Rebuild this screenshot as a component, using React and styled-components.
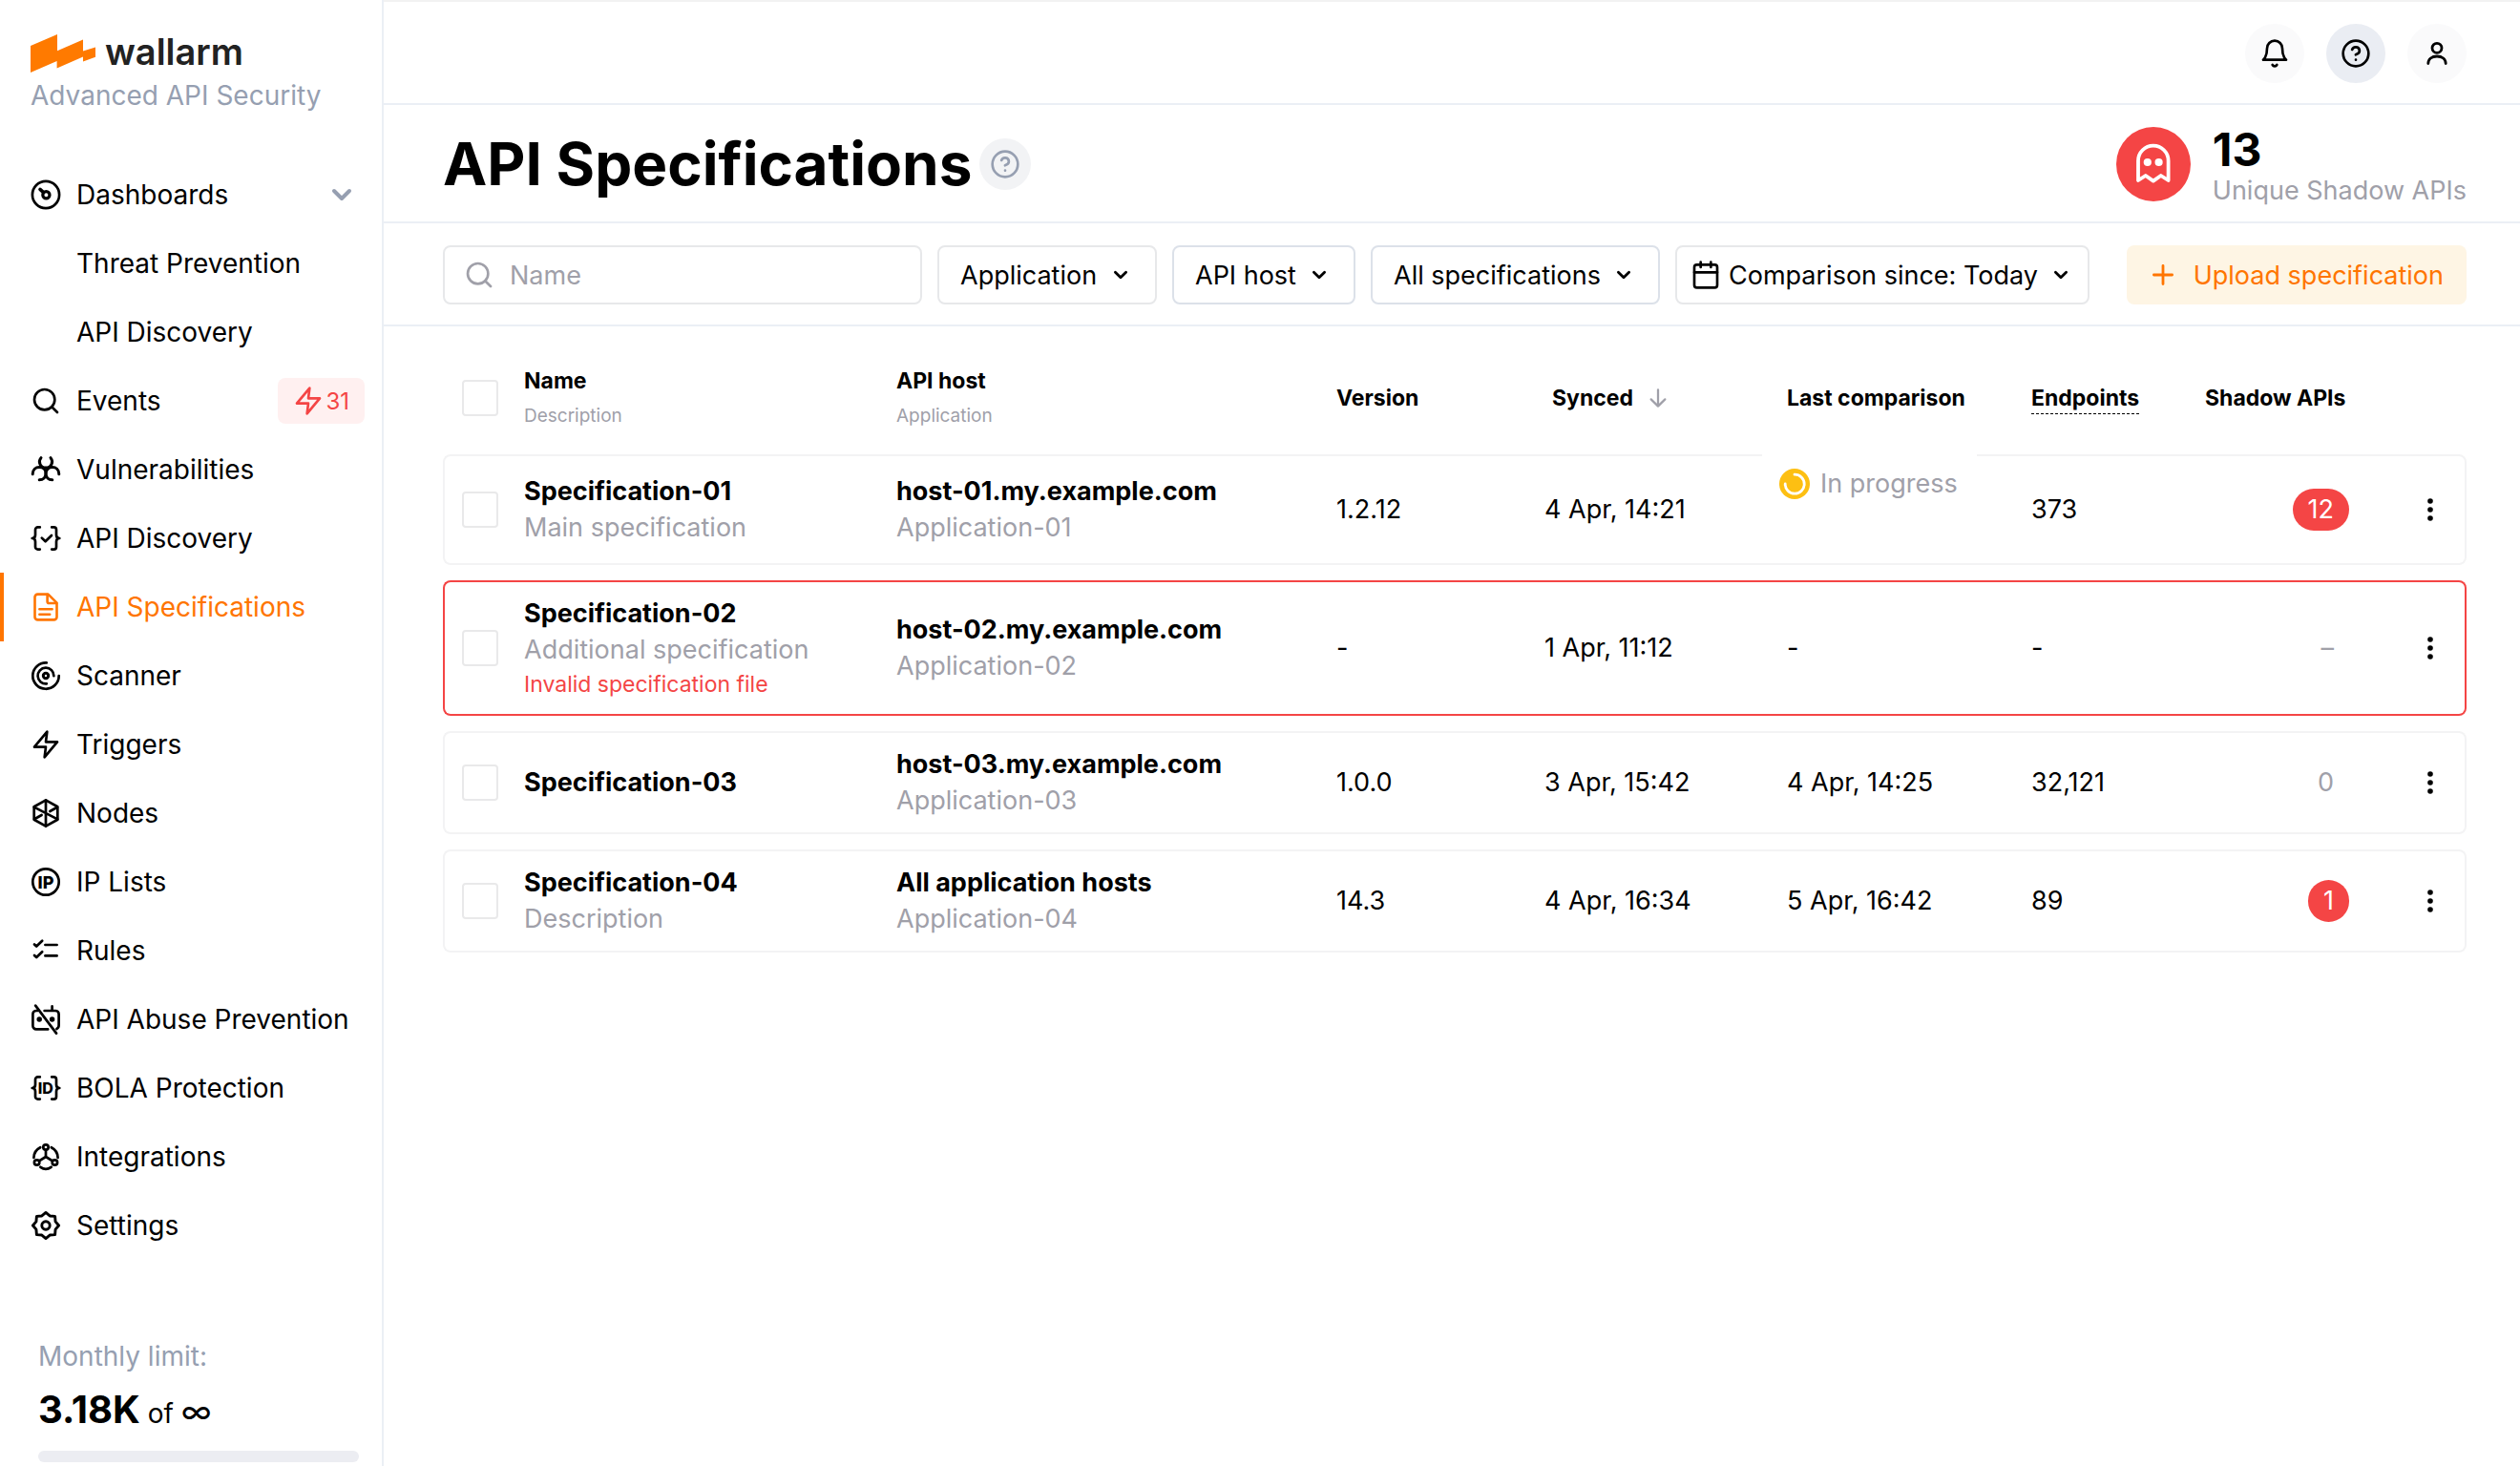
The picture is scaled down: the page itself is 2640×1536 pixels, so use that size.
import React from "react";
import styled, { createGlobalStyle } from "styled-components";

const c = {
  text: "#000000",
  muted: "#a0a0a9",
  slate: "#969fb1",
  line: "#ebeff5",
  field: "#e7e8ea",
  row: "#f3f3f4",
  orange: "#ff7500",
  red: "#f44545",
};

const Global = createGlobalStyle`
  * { box-sizing: border-box; }
  body {
    margin: 0;
    background: #fff;
    font-family: Inter, "Liberation Sans", sans-serif;
    font-size: 28px;
    color: ${c.text};
  }
  button, input, select { font: inherit; color: inherit; }
`;

/* ---------- icons ---------- */

const Svg = ({ size = 32, box = 32, stroke = 2.7, children, ...rest }) => (
  <svg
    width={size}
    height={size}
    viewBox={`0 0 ${box} ${box}`}
    fill="none"
    stroke="currentColor"
    strokeWidth={stroke}
    strokeLinecap="round"
    strokeLinejoin="round"
    aria-hidden="true"
    {...rest}
  >
    {children}
  </svg>
);

const Glyphs = styled.text`
  font-family: Inter, "Liberation Sans", sans-serif;
  font-weight: 800;
  font-size: ${(p) => p.$size}px;
  fill: currentColor;
  stroke: none;
  text-anchor: middle;
`;

const Dashboard = () => (
  <Svg>
    <circle cx="16" cy="16" r="14.1" />
    <circle cx="16.4" cy="16.2" r="3.6" strokeWidth="3.2" />
    <path d="M10 10.4l3.6 3.2" strokeWidth="3.6" />
  </Svg>
);
const Search = () => (
  <Svg box={24} stroke={2}>
    <circle cx="11" cy="11" r="8" />
    <path d="M21 21l-4.35-4.35" />
  </Svg>
);
const Biohazard = () => (
  <Svg stroke={3}>
    <path d="M11 3.6C7.6 7.6 10 14.1 16 14.1S24.4 7.6 21 3.6" />
    <path d="M2.2 20.8C2.2 16 5.6 13.4 9.2 13.4c4 0 6.8 2.9 6.8 6.6 0 3.9-2.6 6.8-6.8 6.8" />
    <path d="M29.8 20.8c0-4.8-3.4-7.4-7-7.4-4 0-6.8 2.9-6.8 6.6 0 3.9 2.6 6.8 6.8 6.8" />
  </Svg>
);
const Braces = () => (
  <>
    <path d="M9.8 4.4H7.6A2.6 2.6 0 0 0 5 7v5.6C5 14.6 4 16 1.7 16 4 16 5 17.4 5 19.4V25a2.6 2.6 0 0 0 2.6 2.6h2.2" />
    <path d="M22.2 4.4h2.2A2.6 2.6 0 0 1 27 7v5.6c0 2 1 3.4 3.3 3.4-2.3 0-3.3 1.4-3.3 3.4V25a2.6 2.6 0 0 1-2.6 2.6h-2.2" />
  </>
);
const Discovery = () => (
  <Svg>
    <Braces />
    <path d="M11.8 15.6l3.8 3.7 6.4-6.3" />
  </Svg>
);
const FileIcon = () => (
  <Svg stroke={2.6}>
    <path d="M18.4 2.6H7.5a3 3 0 0 0-3 3v20.8a3 3 0 0 0 3 3h17a3 3 0 0 0 3-3V11.7z" />
    <path d="M17.6 3v7.2a1.8 1.8 0 0 0 1.8 1.8h7.8M9.4 18.3h13.2M9.4 23.7h10.8" />
  </Svg>
);
const Scanner = () => (
  <Svg>
    <path d="M16.8 2.4A13.7 13.7 0 1 0 29.7 16" />
    <path d="M24.4 16.2A8.4 8.4 0 1 0 16.8 24.4" />
    <circle cx="16" cy="16" r="2.7" strokeWidth="3" />
  </Svg>
);
const Zap = (props) => (
  <Svg box={24} stroke={2} {...props}>
    <path d="M13 2L3 14h9l-1 8 10-12h-9l1-8z" />
  </Svg>
);
const Nodes = () => (
  <Svg>
    <path d="M16 2.4l12.3 6.8v13.6L16 29.6 3.7 22.8V9.2z" />
    <path d="M16 2.4v27.2M3.7 9.6l24.6 12.8M28 9.8l-7.6 4.2M4 22.2l7.6-4.2" />
  </Svg>
);
const IpLists = () => (
  <Svg>
    <circle cx="16" cy="16" r="13.7" />
    <Glyphs $size={18} x="16" y="22.6">IP</Glyphs>
  </Svg>
);
const Rules = () => (
  <Svg>
    <path d="M4 9.4l2.2 2.1 6-5.8M4 20.9L6.2 23l6-5.8M15.4 10h12.2M15.4 21.4h12.2" />
  </Svg>
);
const Abuse = () => (
  <Svg>
    <path d="M7.4 7H6a3.6 3.6 0 0 0-3.6 3.6v12A3.6 3.6 0 0 0 6 26.4h12.2" />
    <path d="M14.6 7H26a3.6 3.6 0 0 1 3.6 3.6v12a3.8 3.8 0 0 1-2.2 3.4" />
    <path d="M22.6 2.4V6.6M5.2 1.6L27 30.6" />
    <circle cx="9.2" cy="16" r="1.4" />
    <circle cx="22.6" cy="16" r="1.4" />
  </Svg>
);
const Bola = () => (
  <Svg>
    <Braces />
    <Glyphs $size={16} x="15.8" y="21.8">ID</Glyphs>
  </Svg>
);
const Integrations = () => (
  <Svg stroke={2.7}>
    <circle cx="16" cy="6" r="2.7" />
    <circle cx="6.6" cy="22" r="2.7" />
    <circle cx="25.4" cy="22" r="2.7" />
    <path d="M16 8.8V16l-7 4.4M16 16l7 4.4" />
    <path d="M10.2 6.2C5.6 8.6 3.4 11.2 3.4 17M21.8 6.2c4.6 2.4 6.8 5 6.8 10.8M10.4 26.8c3.8 2.8 7.4 2.8 11.2 0" />
  </Svg>
);
const gear = Array.from({ length: 16 }, (_, i) => {
  const r = i % 2 ? 10.9 : 13.6;
  const a = (i * Math.PI) / 8;
  return `${(16 + r * Math.sin(a)).toFixed(2)},${(16 - r * Math.cos(a)).toFixed(2)}`;
}).join(" ");
const Settings = () => (
  <Svg stroke={2.9}>
    <polygon points={gear} />
    <circle cx="16" cy="16" r="4.2" />
  </Svg>
);
const Bell = () => (
  <Svg box={24} stroke={2}>
    <path d="M18 8A6 6 0 0 0 6 8c0 7-3 9-3 9h18s-3-2-3-9M13.73 21a2 2 0 0 1-3.46 0" />
  </Svg>
);
const Help = () => (
  <Svg box={24} stroke={2}>
    <circle cx="12" cy="12" r="10" />
    <path d="M9.09 9a3 3 0 0 1 5.83 1c0 2-3 3-3 3M12 17h.01" />
  </Svg>
);
const User = () => (
  <Svg stroke={2.8}>
    <circle cx="16" cy="10.3" r="5" />
    <path d="M6.8 26.6c0-4.6 3.8-7.6 9.2-7.6s9.2 3 9.2 7.6" />
  </Svg>
);
const Calendar = () => (
  <Svg box={24} stroke={2}>
    <rect x="3" y="4" width="18" height="18" rx="2" />
    <path d="M16 2v4M8 2v4M3 10h18" />
  </Svg>
);
const Plus = () => (
  <Svg stroke={2.8}>
    <path d="M16 6.4v19.2M6.4 16h19.2" />
  </Svg>
);
const Chevron = () => (
  <Svg stroke={2.8}>
    <path d="M10.4 13.2L16 18.8l5.6-5.6" />
  </Svg>
);
const WideChevron = () => (
  <Svg stroke={4}>
    <path d="M8 12l8 8 8-8" />
  </Svg>
);
const SortArrow = () => (
  <Svg box={24} stroke={1.7}>
    <path d="M12 5.5v13M6.5 13l5.5 5.5 5.5-5.5" />
  </Svg>
);
const Kebab = () => (
  <Svg stroke={0}>
    <g fill="currentColor">
      <circle cx="16" cy="7" r="2.8" />
      <circle cx="16" cy="16" r="2.8" />
      <circle cx="16" cy="25" r="2.8" />
    </g>
  </Svg>
);
const Ghost = () => (
  <Svg size={78} box={78} stroke={3.8}>
    <path d="M23 56V35.4a15.8 15.8 0 0 1 31.6 0V56L46.8 51l-8 5.6-8-5.6z" />
    <g fill="currentColor" stroke="none">
      <circle cx="32.8" cy="37" r="4.1" />
      <circle cx="44.6" cy="37" r="4.1" />
    </g>
  </Svg>
);
const Spinner = () => (
  <Svg stroke={2.8}>
    <circle cx="16" cy="16" r="16" fill="#fdbf12" stroke="none" />
    <path d="M16 6.2A10 10 0 1 1 6.2 16" stroke="#fff" />
  </Svg>
);
const LogoMark = () => (
  <svg width="68" height="40" viewBox="0 0 68 40" aria-hidden="true">
    <path d="M0 12L28 0v17.2L55 5.4v12L68 13.4v10.4l-13 4.6v-4.8L27.6 35.6V28L0 40z" fill="#ff7a00" />
  </svg>
);

/* ---------- layout ---------- */

const Page = styled.div`
  display: flex;
  min-height: 100vh;
`;
const Sidebar = styled.aside`
  flex: 0 0 402px;
  display: flex;
  flex-direction: column;
  padding: 36px 0 4px;
  border-right: 2px solid ${c.line};
`;
const Brand = styled.div`
  height: 132px;
  padding-left: 32px;
`;
const Logo = styled.a`
  display: flex;
  gap: 10px;
  height: 40px;
  color: #222;
  font-size: 38px;
  line-height: 36px;
  font-weight: 600;
  text-decoration: none;
`;
const Tagline = styled.div`
  margin-top: 7px;
  line-height: 34px;
  color: ${c.slate};
`;
const NavItem = styled.a`
  display: flex;
  align-items: center;
  gap: 16px;
  height: 72px;
  padding: 0 18px 0 ${(p) => (p.$nested ? 80 : 32)}px;
  color: ${(p) => (p.$active ? c.orange : c.text)};
  box-shadow: ${(p) => (p.$active ? `inset 4px 0 ${c.orange}` : "none")};
  text-decoration: none;
  white-space: nowrap;
  svg { flex: none; }
`;
const NavEnd = styled.span`
  display: flex;
  margin-left: auto;
  padding-right: 8px;
  color: ${c.slate};
`;
const AlertTag = styled.span`
  display: flex;
  align-items: center;
  gap: 2px;
  height: 48px;
  margin-left: auto;
  padding: 0 16px;
  border-radius: 8px;
  background: #fff0f0;
  color: ${c.red};
  font-size: 24px;
`;
const Usage = styled.section`
  margin-top: auto;
  padding: 0 24px 0 40px;
`;
const UsageLabel = styled.div`
  line-height: 34px;
  color: ${c.slate};
`;
const UsageValue = styled.div`
  margin: 12px 0;
  line-height: 54px;
  strong { font-size: 40px; font-weight: 700; }
`;
const Infinite = styled.span`
  font-size: 34px;
  line-height: 34px;
`;
const UsageBar = styled.div`
  height: 12px;
  border-radius: 6px;
  background: #ecedf2;
`;

const Main = styled.main`
  flex: 1;
  min-width: 0;
  border-top: 2px solid #f2f2f2;
  font-size: 27px;
`;
const Bar = styled.header`
  display: flex;
  align-items: center;
  gap: ${(p) => p.$gap}px;
  height: ${(p) => p.$height}px;
  padding: 2px 56px 0 62px;
  border-bottom: 2px solid ${c.line};
`;
const Tools = styled.div`
  display: flex;
  gap: 23px;
  margin-left: auto;
`;
const RoundButton = styled.button`
  display: grid;
  place-items: center;
  width: ${(p) => p.$size}px;
  height: ${(p) => p.$size}px;
  padding: 0;
  border: 0;
  border-radius: 50%;
  background: ${(p) => p.$bg};
  color: ${(p) => p.$color || c.text};
`;
const Title = styled.h1`
  margin: 0;
  font-size: 62px;
  line-height: 80px;
  font-weight: 700;
`;
const Shadow = styled.div`
  display: flex;
  align-items: center;
  gap: 23px;
  margin-left: auto;
`;
const GhostDisc = styled.span`
  display: flex;
  border-radius: 50%;
  background: ${c.red};
  color: #fff;
`;
const ShadowText = styled.div`
  padding-top: 6px;
`;
const ShadowCount = styled.div`
  font-size: 48px;
  line-height: 50px;
  font-weight: 700;
`;
const ShadowLabel = styled.div`
  line-height: 36px;
  color: ${c.muted};
`;

const Field = styled.label`
  display: flex;
  align-items: center;
  height: 62px;
  border: 2px solid ${(p) => (p.$cool ? "#dce1e9" : c.field)};
  border-radius: 8px;
  svg { flex: none; pointer-events: none; }
`;
const SearchField = styled(Field)`
  flex: 0 1 502px;
  gap: 16px;
  padding: 0 20px;
  color: ${c.muted};
`;
const SearchInput = styled.input`
  flex: 1;
  width: 0;
  padding: 0;
  border: 0;
  outline: 0;
  background: none;
  &::placeholder { color: ${c.muted}; opacity: 1; }
`;
const SelectField = styled(Field)`
  gap: 8px;
  padding: ${(p) => (p.$icon ? "0 12px 0 14px" : "0 20px 0 22px")};
`;
const Select = styled.select`
  appearance: none;
  padding: 0;
  border: 0;
  outline: 0;
  background: none;
`;
const Upload = styled.button`
  display: flex;
  align-items: center;
  gap: 16px;
  height: 62px;
  margin-left: auto;
  padding: 0 24px 0 22px;
  border: 0;
  border-radius: 8px;
  background: #fef5e4;
  color: ${c.orange};
  white-space: nowrap;
`;

const TableWrap = styled.div`
  padding: 16px 56px 0 62px;
`;
const Table = styled.table`
  width: 100%;
  table-layout: fixed;
  border-spacing: 0 16px;
  line-height: 38px;
`;
const Th = styled.th`
  height: 86px;
  padding: 0 0 0 ${(p) => p.$pad || 0}px;
  text-align: left;
  font-size: 23px;
  font-weight: 700;
  line-height: 38px;
  white-space: nowrap;
`;
const ThSub = styled.div`
  font-size: 19px;
  font-weight: 400;
  line-height: 36px;
  color: ${c.muted};
`;
const ThSort = styled.span`
  display: flex;
  align-items: center;
  gap: 10px;
  svg { color: ${c.muted}; }
`;
const Dotted = styled.span`
  display: inline-block;
  line-height: 32px;
  border-bottom: 1px dashed #000;
`;
const Row = styled.tr`
  height: ${(p) => (p.$tall ? 116 : 108)}px;
`;
const Td = styled.td`
  position: relative;
  padding: 14px 0;
  border: 0 solid ${(p) => (p.$error ? c.red : c.row)};
  border-width: 2px 0;
  text-align: ${(p) => (p.$right ? "right" : "left")};
  white-space: nowrap;
  &:first-child { border-left-width: 2px; border-radius: 8px 0 0 8px; padding-left: 18px; }
  &:last-child { border-right-width: 2px; border-radius: 0 8px 8px 0; padding-right: 20px; }
`;
const CheckTh = styled(Th)`
  padding-left: 20px;
`;
const Check = styled.input`
  appearance: none;
  display: block;
  width: 38px;
  height: 38px;
  margin: 0;
  border: 2px solid #e9e9ea;
  border-radius: 4px;
  background: #fff;
`;
const Strong = styled.div`
  font-weight: 700;
`;
const Muted = styled.div`
  color: ${c.muted};
`;
const ErrorText = styled.div`
  font-size: 23px;
  line-height: 34px;
  color: ${c.red};
`;
const Progress = styled.div`
  position: absolute;
  top: -2px;
  left: -26px;
  display: flex;
  align-items: center;
  gap: 11px;
  height: 62px;
  padding: 0 20px 0 18px;
  background: #fff;
  color: ${c.muted};
`;
const Count = styled.span`
  display: inline-block;
  padding: 0 16px;
  border-radius: 22px;
  line-height: 44px;
  background: ${(p) => (p.$hot ? c.red : "transparent")};
  color: ${(p) => (p.$hot ? "#fff" : c.muted)};
`;
const MenuButton = styled.button`
  display: flex;
  margin-left: auto;
  padding: 0;
  border: 0;
  background: none;
`;

/* ---------- data ---------- */

const nav = [
  { label: "Dashboards", Icon: Dashboard, chevron: true },
  { label: "Threat Prevention" },
  { label: "API Discovery" },
  { label: "Events", Icon: Search, alerts: 31 },
  { label: "Vulnerabilities", Icon: Biohazard },
  { label: "API Discovery", Icon: Discovery },
  { label: "API Specifications", Icon: FileIcon, active: true },
  { label: "Scanner", Icon: Scanner },
  { label: "Triggers", Icon: Zap },
  { label: "Nodes", Icon: Nodes },
  { label: "IP Lists", Icon: IpLists },
  { label: "Rules", Icon: Rules },
  { label: "API Abuse Prevention", Icon: Abuse },
  { label: "BOLA Protection", Icon: Bola },
  { label: "Integrations", Icon: Integrations },
  { label: "Settings", Icon: Settings },
];

const filters = [
  { label: "Application" },
  { label: "API host", cool: true },
  { label: "All specifications", cool: true },
  { label: "Comparison since: Today", Icon: Calendar },
];

const columns = [85, 390, 461, 218, 254, 256, 178, 155, 123];

const specs = [
  { name: "Specification-01", note: "Main specification", host: "host-01.my.example.com", app: "Application-01", version: "1.2.12", synced: "4 Apr, 14:21", progress: true, endpoints: "373", shadow: "12", hot: true },
  { name: "Specification-02", note: "Additional specification", error: "Invalid specification file", host: "host-02.my.example.com", app: "Application-02", version: "-", synced: "1 Apr, 11:12", compared: "-", endpoints: "-", shadow: "–" },
  { name: "Specification-03", host: "host-03.my.example.com", app: "Application-03", version: "1.0.0", synced: "3 Apr, 15:42", compared: "4 Apr, 14:25", endpoints: "32,121", shadow: "0" },
  { name: "Specification-04", note: "Description", host: "All application hosts", app: "Application-04", version: "14.3", synced: "4 Apr, 16:34", compared: "5 Apr, 16:42", endpoints: "89", shadow: "1", hot: true },
];

const SpecRow = ({ spec }) => {
  const error = Boolean(spec.error);
  return (
    <Row $tall={spec.progress}>
      <Td $error={error}><Check type="checkbox" aria-label={`Select ${spec.name}`} /></Td>
      <Td $error={error}>
        <Strong>{spec.name}</Strong>
        {spec.note && <Muted>{spec.note}</Muted>}
        {spec.error && <ErrorText>{spec.error}</ErrorText>}
      </Td>
      <Td $error={error}>
        <Strong>{spec.host}</Strong>
        <Muted>{spec.app}</Muted>
      </Td>
      <Td $error={error}>{spec.version}</Td>
      <Td $error={error}>{spec.synced}</Td>
      <Td $error={error}>
        {spec.progress ? <Progress><Spinner />In progress</Progress> : spec.compared}
      </Td>
      <Td $error={error}>{spec.endpoints}</Td>
      <Td $error={error} $right><Count $hot={spec.hot}>{spec.shadow}</Count></Td>
      <Td $error={error}><MenuButton aria-label={`Actions for ${spec.name}`}><Kebab /></MenuButton></Td>
    </Row>
  );
};

export default function App() {
  return (
    <Page>
      <Global />
      <Sidebar>
        <Brand>
          <Logo href="#"><LogoMark />wallarm</Logo>
          <Tagline>Advanced API Security</Tagline>
        </Brand>
        <nav>
          {nav.map(({ label, Icon, active, chevron, alerts }, i) => (
            <NavItem key={i} href="#" $active={active} $nested={!Icon}>
              {Icon && <Icon />}
              {label}
              {chevron && <NavEnd><WideChevron /></NavEnd>}
              {alerts && <AlertTag><Zap />{alerts}</AlertTag>}
            </NavItem>
          ))}
        </nav>
        <Usage>
          <UsageLabel>Monthly limit:</UsageLabel>
          <UsageValue><strong>3.18K</strong> of <Infinite>∞</Infinite></UsageValue>
          <UsageBar />
        </Usage>
      </Sidebar>
      <Main>
        <Bar $height={108}>
          <Tools>
            <RoundButton $size={62} $bg="#fafafb" aria-label="Notifications"><Bell /></RoundButton>
            <RoundButton $size={62} $bg="#eaedf3" aria-label="Help"><Help /></RoundButton>
            <RoundButton $size={62} $bg="#fafafb" aria-label="Account"><User /></RoundButton>
          </Tools>
        </Bar>
        <Bar $height={124} $gap={8}>
          <Title>API Specifications</Title>
          <RoundButton $size={54} $bg="#f2f3f5" $color={c.slate} aria-label="About this page"><Help /></RoundButton>
          <Shadow>
            <GhostDisc><Ghost /></GhostDisc>
            <ShadowText>
              <ShadowCount>13</ShadowCount>
              <ShadowLabel>Unique Shadow APIs</ShadowLabel>
            </ShadowText>
          </Shadow>
        </Bar>
        <Bar as="div" $height={108} $gap={16}>
          <SearchField>
            <Search />
            <SearchInput type="text" placeholder="Name" aria-label="Name" />
          </SearchField>
          {filters.map(({ label, cool, Icon }) => (
            <SelectField key={label} $cool={cool} $icon={Boolean(Icon)}>
              {Icon && <Icon />}
              <Select aria-label={label}><option>{label}</option></Select>
              <Chevron />
            </SelectField>
          ))}
          <Upload type="button"><Plus />Upload specification</Upload>
        </Bar>
        <TableWrap>
          <Table>
            <colgroup>
              {columns.map((w, i) => <col key={i} width={w} />)}
            </colgroup>
            <thead>
              <tr>
                <CheckTh><Check type="checkbox" aria-label="Select all" /></CheckTh>
                <Th>Name<ThSub>Description</ThSub></Th>
                <Th>API host<ThSub>Application</ThSub></Th>
                <Th>Version</Th>
                <Th $pad={8}><ThSort>Synced<SortArrow /></ThSort></Th>
                <Th>Last comparison</Th>
                <Th><Dotted>Endpoints</Dotted></Th>
                <Th $pad={4}>Shadow APIs</Th>
                <Th aria-label="Actions" />
              </tr>
            </thead>
            <tbody>
              {specs.map((spec) => <SpecRow key={spec.name} spec={spec} />)}
            </tbody>
          </Table>
        </TableWrap>
      </Main>
    </Page>
  );
}
